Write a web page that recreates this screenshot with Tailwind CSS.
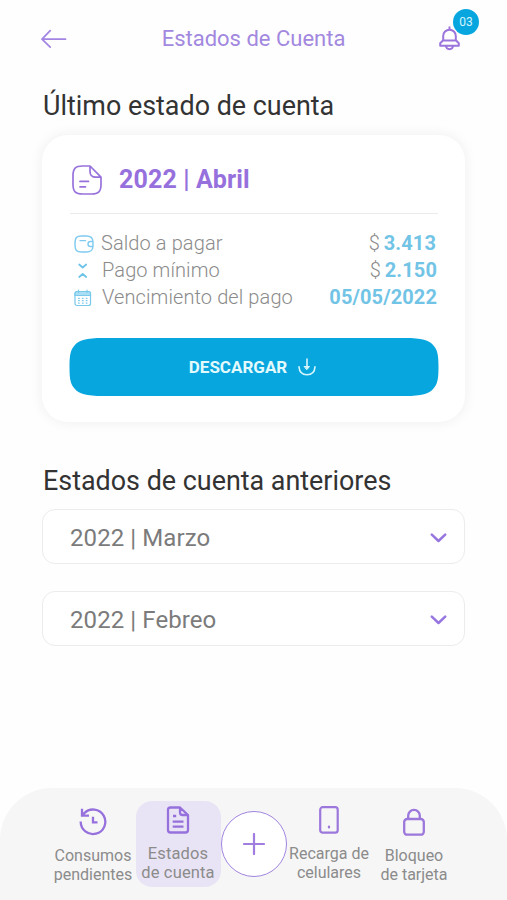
<!DOCTYPE html>
<html lang="es">
<head>
<meta charset="utf-8">
<meta name="viewport" content="width=device-width, initial-scale=1">
<title>Estados de Cuenta</title>
<script src="https://cdn.jsdelivr.net/npm/@tailwindcss/browser@4"></script>
</head>
<body class="bg-white">
<div class="flex h-[900px] w-[507px] flex-col overflow-hidden bg-[#fefefe] font-[Roboto,sans-serif] whitespace-nowrap">
  <header class="flex h-[78px] shrink-0 items-center justify-between pr-[46px] pl-[41px]">
    <svg class="h-5 w-[26px]" viewBox="0 0 26 20" fill="none" stroke="#a284e2" stroke-width="1.7" stroke-linecap="round" stroke-linejoin="round"><path d="M24.5 10.2H1M9.2 1.7 1 10.2l8.2 8"/></svg>
    <h1 class="pl-[2px] text-[22px] leading-[26px] text-[#a288df]">Estados de Cuenta</h1>
    <div class="relative h-[26px] w-[23px]">
      <svg class="h-[26px] w-[23px]" viewBox="0 0 23 26" fill="none" stroke="#9b74dc" stroke-width="2" stroke-linejoin="round"><path d="M11.500 .5v3M5.200 14.500V10a6.300 6.300 0 0 1 12.600 0v4.500M4.900 14.500h13.200l2.700 2.700v2.500H2.200v-2.500zM8 20c.4 4.200 6.600 4.200 7 0"/></svg>
      <span class="absolute -top-[17px] left-[15px] flex size-[26px] items-center justify-center rounded-full bg-[#08a6df] pb-px text-[12px] text-[#d5f5fd]">03</span>
    </div>
  </header>

  <main class="flex flex-col px-[42px]">
    <h2 class="mt-[12px] ml-px text-[26.900px] leading-[32px] text-[#333]">Último estado de cuenta</h2>
    <section class="mt-[13px] h-[287px] rounded-[26px] bg-white px-[27px] shadow-[0_0_12px_2px_rgba(0,0,0,0.05)]">
      <div class="ml-[1px] flex h-[79px] items-center border-b-[1.500px] border-[#ebebeb] pt-[11px]">
        <svg class="ml-[2px] size-[30px]" viewBox="0 0 30 30" fill="none" stroke="#9872dc" stroke-width="1.700" stroke-linecap="round" stroke-linejoin="round"><path d="M18 1H10.500C3.500 1 1 3.500 1 10.500v9C1 26.500 3.500 29 10.500 29h9c7 0 9.500-2.500 9.500-9.500V12.200zM18 1v5.500c0 4 1.700 5.700 6 5.700h5M8 16.400h8.500M8 21.800h5.500"/></svg>
        <h3 class="ml-[17px] text-[25px] leading-[30px] font-bold tracking-[0.12px] text-[#9670dc]">2022 | Abril</h3>
      </div>
      <dl class="mt-[16px] flex flex-col text-[20px] leading-[27px] font-light tracking-[0.1px] text-[#8b8b8b]">
        <div class="flex items-center pl-[5px]">
          <svg class="h-[18px] w-[20px]" viewBox="0 0 20 18" fill="none" stroke="#7fcaf0" stroke-width="1.400" stroke-linecap="round" stroke-linejoin="round"><path d="M19 6.500C18.700 2.500 17 1 12.500 1h-5C2.500 1 1 2.500 1 9s1.500 8 6.500 8h5c4.500 0 6.200-1.500 6.500-5.500M19 6.500h-2.500a2.500 2.500 0 0 0 0 5H19zM6 5.600h5.500"/></svg>
          <dt class="ml-[7px]">Saldo a pagar</dt>
          <dd class="mr-[2px] ml-auto">$ <b class="-ml-px font-bold text-[#72c4e6]">3.413</b></dd>
        </div>
        <div class="flex items-center pl-[5px]">
          <svg class="h-[18px] w-[20px]" viewBox="0 0 20 18" fill="none" stroke="#6bc3e8" stroke-width="1.700" stroke-linecap="round" stroke-linejoin="round"><path d="m5.200 2.500 3.500 3 3.500-3M5.200 15l3.500-3 3.500 3"/></svg>
          <dt class="ml-[8px]">Pago mínimo</dt>
          <dd class="mr-px ml-auto">$ <b class="-ml-px font-bold text-[#72c4e6]">2.150</b></dd>
        </div>
        <div class="flex items-center pl-[5px]">
          <svg class="h-[18px] w-[20px]" viewBox="0 0 20 18" fill="none" stroke="#78c9ec" stroke-width="1.200" stroke-linecap="round"><rect x="1" y="2.500" width="15.500" height="14" rx="2"/><path fill="#a9def4" d="M1 6.500V4.500a2 2 0 0 1 2-2h11.500a2 2 0 0 1 2 2v2zM4.500 1v2.500M13 1v2.500"/><path d="M4.500 9.300h.8M8.400 9.300h.8M12.200 9.300h.8M4.500 11.700h.8M8.400 11.700h.8M12.200 11.700h.8M4.500 14.100h.8M8.400 14.100h.8M12.200 14.100h.8"/></svg>
          <dt class="ml-[8px]">Vencimiento del pago</dt>
          <dd class="mr-px ml-auto font-bold text-[#72c4e6]">05/05/2022</dd>
        </div>
      </dl>
      <button class="relative mt-[27px] flex h-[58px] w-[370px] items-center justify-center gap-[11px] pr-[3px]">
        <svg class="absolute inset-0 h-[58px] w-[370px]" viewBox="0 0 370 58" fill="#08a6df"><path d="M.5 29C.5 17 1.500 12 5.500 7.500 10 2 17 0 34 0h302c17 0 24 2 28.500 7.500 4 4.500 5 9.500 5 21.500s-1 17-5 21.500C360 56 353 58 336 58H34C17 58 10 56 5.500 50.500 1.500 46 .5 41 .5 29z"/></svg>
        <span class="relative text-[17px] leading-5 font-bold text-[#e3fafd]">DESCARGAR</span>
        <svg class="relative h-[18px] w-[18px]" viewBox="0 0 18 18" fill="none" stroke="#d5f6fc" stroke-width="1.600" stroke-linecap="round" stroke-linejoin="round"><path d="M9 1v9M1 8.800C1.300 13.800 4.300 16.800 9 16.800s7.700-3 8-8"/><path fill="#d5f6fc" stroke-width="1" d="M6.500 8.500h5L9 11.500z"/></svg>
      </button>
    </section>

    <h2 class="mt-[43px] ml-px text-[26.900px] leading-[32px] text-[#333]">Estados de cuenta anteriores</h2>
    <div class="mt-[12px] flex flex-col gap-[27px] text-[24px] tracking-[0.08px] text-[#7b7b7b]">
      <div class="flex h-[55px] items-center justify-between rounded-[13px] border border-[#ececec] bg-white pr-[17px] pl-[27px]">
        <span class="pt-[2px]">2022 | Marzo</span>
        <svg class="mt-[3px] h-[10px] w-[17px]" viewBox="0 0 17 10" fill="none" stroke="#9876e0" stroke-width="2.500" stroke-linecap="round" stroke-linejoin="round"><path d="m1.800 1.600 6.700 6.400 6.700-6.400"/></svg>
      </div>
      <div class="flex h-[55px] items-center justify-between rounded-[13px] border border-[#ececec] bg-white pr-[17px] pl-[27px]">
        <span class="pt-[2px]">2022 | Febreo</span>
        <svg class="mt-[3px] h-[10px] w-[17px]" viewBox="0 0 17 10" fill="none" stroke="#9876e0" stroke-width="2.500" stroke-linecap="round" stroke-linejoin="round"><path d="m1.800 1.600 6.700 6.400 6.700-6.400"/></svg>
      </div>
    </div>
  </main>

  <nav class="mt-auto flex h-[112px] shrink-0 items-start justify-center rounded-t-[52px] bg-[#f6f6f6] pt-[13px] text-center text-[16px] leading-[19px] text-[#8b8b8b]">
    <a class="flex w-[85px] flex-col items-center pt-[7px]">
      <svg class="size-[28px]" viewBox="0 0 28 28" fill="none" stroke="#9670dc" stroke-width="2.300"><path d="M1.700 13.500a12.300 12.300 0 1 0 3.500-8.300L3 7.300M3 .8v6.800h7M14 8.700v5.700h4.500"/></svg>
      <span class="mt-[10px]">Consumos<br>pendientes</span>
    </a>
    <a class="flex h-[86px] w-[85px] flex-col items-center rounded-[16px] bg-[#e9e4f5] pt-[5px] text-[16.500px] tracking-[0.15px]">
      <svg class="h-[28px] w-[24px]" viewBox="0 0 24 28" fill="none" stroke="#9670dc" stroke-width="2.300" stroke-linejoin="round"><path d="M14 1.500H4.500a2.500 2.500 0 0 0-2.500 2.500v20a2.500 2.500 0 0 0 2.500 2.500h15a2.500 2.500 0 0 0 2.500-2.500V9zM14 1.500V6.500A2.500 2.500 0 0 0 16.500 9H22M7 10h3.200M6.700 15.600h10.800M6.700 20.700h10.800"/></svg>
      <span class="mt-[10px]">Estados<br>de cuenta</span>
    </a>
    <a class="mt-[10px] flex size-[66px] shrink-0 items-center justify-center rounded-full border-[1.500px] border-[#a184e0] bg-white">
      <svg class="size-[22px]" viewBox="0 0 22 22" stroke="#a07ee0" stroke-width="2.200" stroke-linecap="round"><path d="M11 1v20M1 11h20"/></svg>
    </a>
    <a class="flex w-[85px] flex-col items-center pt-[5px]">
      <svg class="h-[28px] w-[20px]" viewBox="0 0 20 28" fill="none" stroke="#9c77dc" stroke-width="2.200" stroke-linecap="round"><rect x="1.200" y="1.200" width="17.500" height="25.500" rx="2.500"/><path d="M10 20.500v1"/></svg>
      <span class="mt-[10px]">Recarga de<br>celulares</span>
    </a>
    <a class="flex w-[85px] flex-col items-center pt-[7px]">
      <svg class="h-[28px] w-[22px]" viewBox="0 0 22 28" fill="none" stroke="#9c77dc" stroke-width="2.300"><rect x="1.200" y="11" width="19.600" height="15.700" rx="3"/><path d="M5.200 11V7.700a5.800 5.800 0 0 1 11.600 0V11"/></svg>
      <span class="mt-[10px]">Bloqueo<br>de tarjeta</span>
    </a>
  </nav>
</div>
</body>
</html>
